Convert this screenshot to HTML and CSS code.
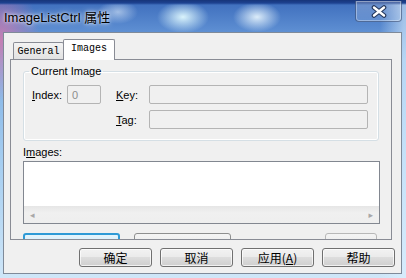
FILE: index.html
```html
<!DOCTYPE html>
<html lang="zh-CN">
<head>
  <meta charset="UTF-8" />
  <title>ImageListCtrl 属性</title>
  <link rel="stylesheet" href="styles.css">
</head>
<body>
  <div class="window">
    <div class="titlebar">
      <span class="title">ImageListCtrl 属性</span>
      <button class="close" aria-label="Close">
        <svg width="16" height="13" viewBox="0 0 16 13">
          <path d="M3 2.5 L13 10.5 M13 2.5 L3 10.5" stroke="#24365a" stroke-width="4.6" stroke-linecap="round"/>
          <path d="M3 2.5 L13 10.5 M13 2.5 L3 10.5" stroke="#ffffff" stroke-width="2.4" stroke-linecap="round"/>
        </svg>
      </button>
    </div>

    <div class="client">
      <div class="tabs">
        <span class="tab">General</span>
        <span class="tab active">Images</span>
      </div>

      <div class="pane">
        <fieldset class="group">
          <legend>Current Image</legend>
          <div class="fields">
            <label class="lbl"><u>I</u>ndex:</label>
            <span class="box index">0</span>
            <label class="lbl"><u>K</u>ey:</label>
            <span class="box"></span>
            <label class="lbl tag"><u>T</u>ag:</label>
            <span class="box"></span>
          </div>
        </fieldset>

        <div class="list-label">I<u>m</u>ages:</div>
        <div class="list">
          <div class="list-body"></div>
          <div class="hscroll">
            <span class="arrow">&#9666;</span>
            <span class="arrow">&#9656;</span>
          </div>
        </div>

        <div class="peek">
          <span class="peek-btn blue"></span>
          <span class="peek-btn"></span>
          <span class="peek-btn short"></span>
        </div>
      </div>

      <div class="actions">
        <button class="btn">确定</button>
        <button class="btn">取消</button>
        <button class="btn">应用(<u>A</u>)</button>
        <button class="btn">帮助</button>
      </div>
    </div>
  </div>
</body>
</html>
```

FILE: styles.css
```css
* {
  box-sizing: border-box;
  margin: 0;
  padding: 0;
}
body {
  width: 406px;
  height: 278px;
  overflow: hidden;
  font-family: 'Liberation Sans', 'Noto Sans CJK SC', sans-serif;
  font-size: 11px;
  color: #000;
}
.window {
  width: 406px;
  height: 278px;
  background:
    linear-gradient(to bottom, #17357a 0, #1d4290 3px, rgba(0,0,0,0) 5px),
    radial-gradient(ellipse 26px 16px at 183px 17px, rgba(225,250,255,0.95), rgba(225,250,255,0) 100%),
    radial-gradient(ellipse 24px 15px at 257px 17px, rgba(235,248,255,0.9), rgba(235,248,255,0) 100%),
    radial-gradient(ellipse 20px 12px at 118px 12px, rgba(220,235,250,0.6), rgba(220,235,250,0) 100%),
    radial-gradient(ellipse 40px 60px at 0px 40px, rgba(220,120,170,0.8), rgba(220,120,170,0) 100%),
    linear-gradient(to right, rgba(0,0,0,0) 380px, rgba(220,240,255,0.6) 404px),
    linear-gradient(to bottom, #3c6cbc 0, #5a8bd0 28px, #7fb0e4 60px, #a5cdf0 160px, #cfe6f8 278px);
}
.titlebar {
  display: flex;
  align-items: flex-start;
  height: 32px;
}
.title {
  padding: 10px 0 0 4px;
  font-size: 13px;
  line-height: 15px;
  text-shadow: 0 0 6px rgba(255,255,255,0.9), 0 0 3px rgba(255,255,255,0.8);
}
.close {
  margin: 1px 4px 0 auto;
  width: 47px;
  height: 21px;
  display: flex;
  align-items: center;
  justify-content: center;
  border: 1px solid rgba(40,60,100,0.55);
  border-top: none;
  border-radius: 0 0 4px 4px;
  background: linear-gradient(rgba(255,255,255,0.25), rgba(255,255,255,0.1));
  box-shadow: inset 0 0 0 1px rgba(255,255,255,0.35);
}
.client {
  margin: 0 4px 0 3px;
  height: 242px;
  background: #f0f0f0;
  border: 1px solid #7f8a99;
  padding: 6px 0 0 6px;
}
.tabs {
  display: flex;
  align-items: flex-end;
  height: 20px;
  padding-left: 3px;
  font-family: 'Liberation Mono', monospace;
  font-size: 10px;
}
.tab {
  height: 17px;
  width: 51px;
  display: flex;
  align-items: center;
  justify-content: center;
  border: 1px solid #898c95;
  border-bottom: none;
  background: linear-gradient(#f3f3f3, #e2e2e2);
  border-radius: 2px 2px 0 0;
}
.tab.active {
  height: 21px;
  width: 52px;
  margin-bottom: -1px;
  margin-left: -1px;
  padding-bottom: 3px;
  background: #fff;
  position: relative;
  z-index: 1;
}
.pane {
  width: 382px;
  height: 181px;
  overflow: hidden;
  border: 1px solid #898c95;
  background: #f0f0f0;
}
.group {
  margin: 5px 0 0 12px;
  width: 356px;
  border: 1px solid #d5dfe5;
  border-radius: 3px;
  box-shadow: inset 0 0 0 1px #fff;
  padding: 7px 10px 11px 8px;
}
.group legend {
  margin-left: -3px;
  padding: 0 2px;
  line-height: 13px;
}
.fields {
  display: grid;
  grid-template-columns: 35px 49px 33px 1fr;
  grid-auto-rows: 19px;
  row-gap: 6px;
  align-items: center;
}
.lbl.tag {
  grid-column: 3;
}
.box {
  height: 19px;
  border: 1px solid #b4b4b4;
  border-radius: 2px;
  background: #f0f0f0;
  color: #8d8d8d;
  padding: 0 0 0 4px;
  display: flex;
  align-items: center;
}
.box.index {
  width: 34px;
}
.list-label {
  margin: 5px 0 0 12px;
  line-height: 13px;
}
.list {
  margin: 2px 0 0 12px;
  width: 357px;
  height: 63px;
  border: 1px solid #828790;
  background: #fff;
  display: flex;
  flex-direction: column;
}
.list-body {
  flex: 1;
}
.hscroll {
  height: 17px;
  display: flex;
  justify-content: space-between;
  align-items: center;
  padding: 0 6px;
  background: linear-gradient(#e6e6e6, #f0f0f0 40%, #eeeeee);
}
.arrow {
  color: #a8a8a8;
  font-size: 9px;
  font-family: 'DejaVu Sans', sans-serif;
}
.peek {
  display: flex;
  margin: 9px 0 0 12px;
}
.peek-btn {
  width: 99px;
  height: 23px;
  border: 1px solid #8e8f8f;
  border-radius: 3px;
  background: linear-gradient(#f4f4f4, #e4e4e4);
  margin-right: 14px;
}
.peek-btn.blue {
  border: 2px solid #2f9ad6;
  background: linear-gradient(#e5f4fc, #c4e5f6);
}
.peek-btn.short {
  width: 53px;
  margin-left: 80px;
  border-color: #b8b8b8;
}
.actions {
  display: flex;
  justify-content: flex-end;
  gap: 8px;
  padding-right: 6px;
  margin-top: 8px;
}
.btn {
  width: 73px;
  height: 19px;
  border: 1px solid #707070;
  border-radius: 3px;
  background: linear-gradient(#f2f2f2 0, #ebebeb 45%, #dddddd 50%, #cfcfcf 100%);
  box-shadow: inset 0 0 0 1px rgba(255,255,255,0.7);
  font-family: 'Noto Sans CJK SC', sans-serif;
  font-size: 12px;
  line-height: 15px;
  color: #000;
}
```
